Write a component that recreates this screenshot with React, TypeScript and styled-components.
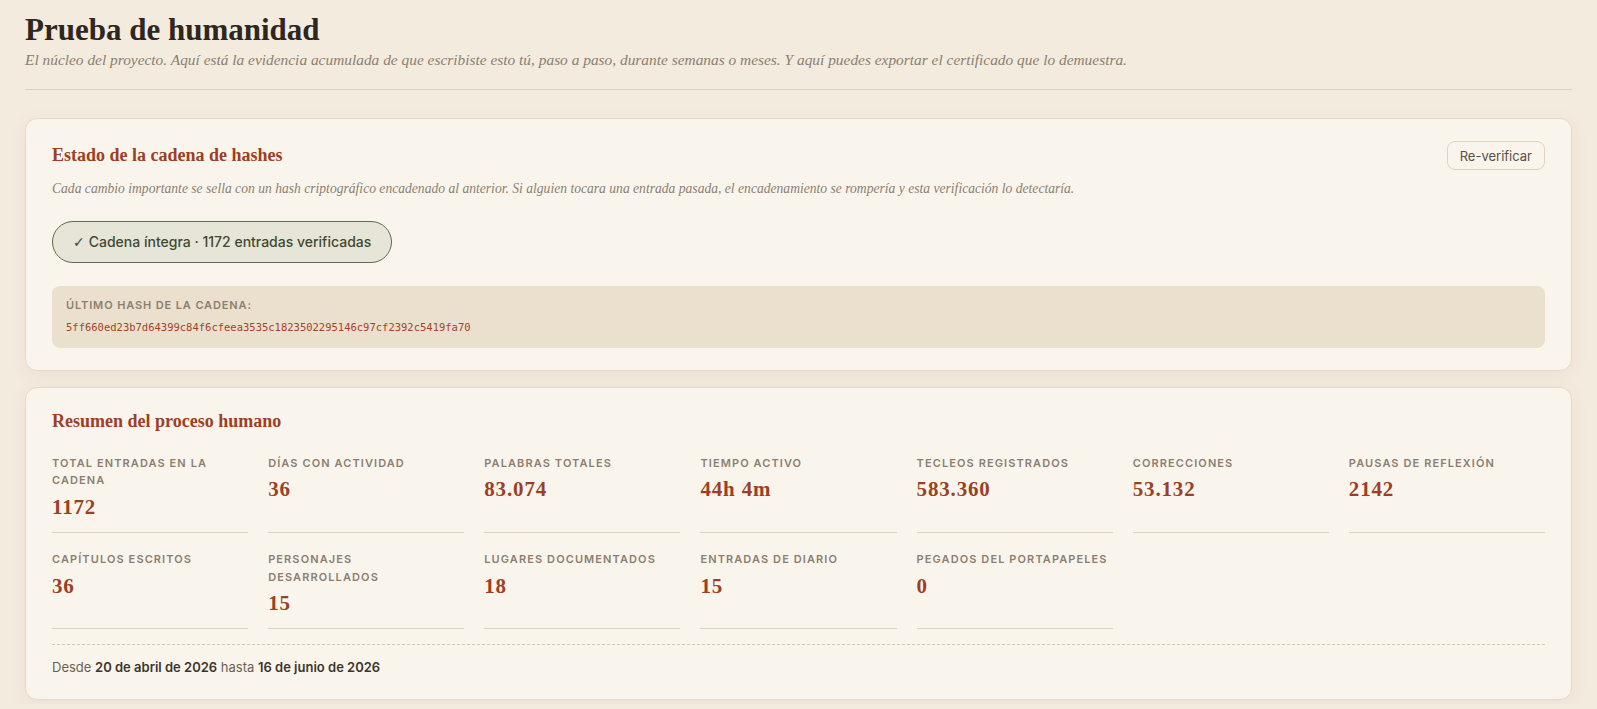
import React from 'react';
import styled, { createGlobalStyle } from 'styled-components';

const GlobalStyle = createGlobalStyle`
  html, body {
    margin: 0;
    padding: 0;
    background-color: #f4ebdf;
  }

  body {
    font-family: Inter, 'Noto Sans', sans-serif;
    color: #2e2620;
  }

  * {
    box-sizing: border-box;
  }
`;

type Stat = { label: string; value: string };

const stats: Stat[] = [
  { label: 'Total entradas en la cadena', value: '1172' },
  { label: 'Días con actividad', value: '36' },
  { label: 'Palabras totales', value: '83.074' },
  { label: 'Tiempo activo', value: '44h 4m' },
  { label: 'Tecleos registrados', value: '583.360' },
  { label: 'Correcciones', value: '53.132' },
  { label: 'Pausas de reflexión', value: '2142' },
  { label: 'Capítulos escritos', value: '36' },
  { label: 'Personajes desarrollados', value: '15' },
  { label: 'Lugares documentados', value: '18' },
  { label: 'Entradas de diario', value: '15' },
  { label: 'Pegados del portapapeles', value: '0' },
];

const lastHash =
  '5ff660ed23b7d64399c84f6cfeea3535c1823502295146c97cf2392c5419fa70';

export default function App() {
  return (
    <>
      <GlobalStyle />
      <Page>
        <PageHeader>
          <h1>Prueba de humanidad</h1>
          <p>
            El núcleo del proyecto. Aquí está la evidencia acumulada de que
            escribiste esto tú, paso a paso, durante semanas o meses. Y aquí
            puedes exportar el certificado que lo demuestra.
          </p>
        </PageHeader>

        <Card>
          <CardHeader>
            <CardTitle>Estado de la cadena de hashes</CardTitle>
            <GhostButton type="button">Re-verificar</GhostButton>
          </CardHeader>
          <CardNote>
            Cada cambio importante se sella con un hash criptográfico
            encadenado al anterior. Si alguien tocara una entrada pasada, el
            encadenamiento se rompería y esta verificación lo detectaría.
          </CardNote>
          <StatusPill>
            <span className="check">✓</span> Cadena íntegra · 1172 entradas
            verificadas
          </StatusPill>
          <HashBox>
            <HashLabel>Último hash de la cadena:</HashLabel>
            <HashValue>{lastHash}</HashValue>
          </HashBox>
        </Card>

        <Card>
          <CardTitle>Resumen del proceso humano</CardTitle>
          <StatsGrid>
            {stats.map(stat => (
              <StatItem key={stat.label}>
                <StatLabel>{stat.label}</StatLabel>
                <StatValue>{stat.value}</StatValue>
              </StatItem>
            ))}
          </StatsGrid>
          <RangeNote>
            Desde <strong>20 de abril de 2026</strong> hasta{' '}
            <strong>16 de junio de 2026</strong>
          </RangeNote>
        </Card>
      </Page>
    </>
  );
}

const Page = styled.div`
  padding: 12px 25px 4px;
  display: flex;
  flex-direction: column;
  gap: 16px;
`;

const PageHeader = styled.header`
  padding: 0 0 19px;
  margin: 0 0 12px;
  border-bottom: 1px solid #ddd1bf;

  h1 {
    margin: 0;
    font-family: 'Liberation Serif', serif;
    font-size: 31px;
    line-height: 36px;
    font-weight: 700;
    color: #2e2620;
  }

  p {
    margin: 1px 0 0;
    font-family: 'Liberation Serif', serif;
    font-style: italic;
    font-size: 15.4px;
    line-height: 21px;
    color: #8b7f70;
  }
`;

const Card = styled.section`
  padding: 22px 26px;
  background-color: #faf5ec;
  border: 1px solid #e5dac8;
  border-radius: 12px;
  box-shadow: 0 4px 18px rgb(120 90 50 / 0.07);
`;

const CardHeader = styled.div`
  display: flex;
  justify-content: space-between;
  align-items: center;
`;

const CardTitle = styled.h2`
  margin: 0;
  font-family: 'Liberation Serif', serif;
  font-size: 18px;
  line-height: 23px;
  font-weight: 700;
  color: #9c3f25;
`;

const GhostButton = styled.button`
  height: 29px;
  padding: 0 12px;
  font-family: Inter, sans-serif;
  font-size: 13px;
  color: #5a4f45;
  background-color: transparent;
  border: 1px solid #e0d3bd;
  border-radius: 8px;
  cursor: pointer;
`;

const CardNote = styled.p`
  margin: 9px 0 0;
  font-family: 'Liberation Serif', serif;
  font-style: italic;
  font-size: 13.6px;
  line-height: 19.5px;
  color: #8b7f70;
`;

const StatusPill = styled.div`
  margin: 22px 0 0;
  display: inline-flex;
  align-items: center;
  gap: 4px;
  padding: 10px 20px;
  font-size: 14px;
  line-height: 20px;
  font-weight: 500;
  color: #3f4a33;
  background-color: #e7e5d7;
  border: 1px solid #5e6c4c;
  border-radius: 999px;

  .check {
    font-family: 'DejaVu Sans', sans-serif;
    font-weight: 700;
  }
`;

const HashBox = styled.div`
  margin: 23px 0 0;
  padding: 11px 14px 12px;
  background-color: #ebe0cd;
  border-radius: 8px;
`;

const HashLabel = styled.div`
  font-size: 11px;
  line-height: 16.5px;
  font-weight: 600;
  letter-spacing: 0.08em;
  text-transform: uppercase;
  color: #8b7f70;
`;

const HashValue = styled.code`
  display: block;
  margin: 6px 0 0;
  font-family: 'DejaVu Sans Mono', 'Liberation Mono', monospace;
  font-size: 10.5px;
  line-height: 16.8px;
  color: #a4432a;
`;

const StatsGrid = styled.div`
  margin: 22px 0 0;
  display: grid;
  grid-template-columns: repeat(7, 1fr);
  gap: 18px 20px;
`;

const StatItem = styled.div`
  padding: 0 0 12px;
  border-bottom: 1px solid #ddd1bf;
`;

const StatLabel = styled.div`
  padding: 0 4px 0 0;
  font-size: 11px;
  line-height: 17.6px;
  font-weight: 600;
  letter-spacing: 0.1em;
  text-transform: uppercase;
  color: #8b7f70;
`;

const StatValue = styled.div`
  margin: 4px 0 0;
  font-family: 'Liberation Serif', serif;
  font-size: 21px;
  line-height: 26px;
  font-weight: 700;
  letter-spacing: 0.04em;
  color: #9c3f25;
`;

const RangeNote = styled.p`
  margin: 15px 0 0;
  padding: 12px 0 0;
  border-top: 1px dashed #d6cab6;
  font-size: 13px;
  line-height: 20px;
  color: #6b5f52;

  strong {
    font-weight: 600;
    color: #3d352d;
  }
`;
